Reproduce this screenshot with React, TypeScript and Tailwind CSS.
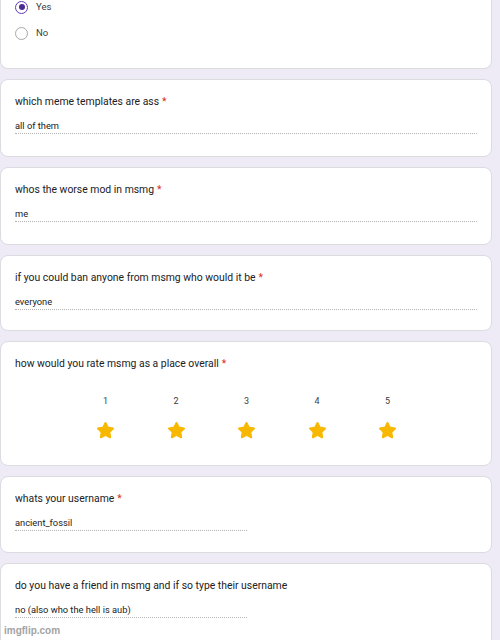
import { Star } from 'lucide-react';

const ink = 'text-[#202124]';

function Card({ className = '', children }: { className?: string; children: React.ReactNode }) {
  return (
    <div className={`shrink-0 rounded-lg border border-[#dadce0] bg-white px-[14px] ${className}`}>
      {children}
    </div>
  );
}

function Title({ text, required = true }: { text: string; required?: boolean }) {
  return (
    <div className={`pt-[14px] text-[10.4px] leading-[16px] ${ink}`}>
      {text}
      {required && <span className="ml-[3px] text-[#d93025]">*</span>}
    </div>
  );
}

function Answer({ value, short = false }: { value: string; short?: boolean }) {
  return (
    <div
      className={`mt-[10px] border-b border-dotted border-[#b4b4b4] pb-[1px] text-[9.3px] leading-[12px] ${ink} ${
        short ? 'w-[232px]' : 'w-full'
      }`}
    >
      {value}
    </div>
  );
}

function Radio({ label, checked }: { label: string; checked?: boolean }) {
  return (
    <div className="flex h-[14px] items-center gap-[8px]">
      <div
        className={`flex h-[13px] w-[13px] items-center justify-center rounded-full border-[1.5px] ${
          checked ? 'border-[#673ab7]' : 'border-[#a8a8a8]'
        }`}
      >
        {checked && <div className="h-[6px] w-[6px] rounded-full bg-[#4a2b8f]" />}
      </div>
      <span className="text-[9.5px] text-[#3c4043]">{label}</span>
    </div>
  );
}

export default function App() {
  return (
    <div
      className="relative flex h-[640px] w-[500px] flex-col gap-[10px] overflow-hidden bg-[#eeebf7] pr-[8px]"
      style={{ fontFamily: 'Roboto, "Liberation Sans", sans-serif' }}
    >
      {/* tail of the previous question */}
      <Card className="-mt-[20px] h-[89px] rounded-t-none border-t-0">
        <div className="flex flex-col gap-[12px] pt-[20px]">
          <Radio label="Yes" checked />
          <Radio label="No" />
        </div>
      </Card>

      <Card className="h-[78px]">
        <Title text="which meme templates are ass" />
        <Answer value="all of them" />
      </Card>

      <Card className="h-[78px]">
        <Title text="whos the worse mod in msmg" />
        <Answer value="me" />
      </Card>

      <Card className="h-[76px]">
        <Title text="if you could ban anyone from msmg who would it be" />
        <Answer value="everyone" />
      </Card>

      <Card className="h-[125px]">
        <Title text="how would you rate msmg as a place overall" />
        <div className="mt-[23px] flex justify-center pl-[1px]">
          {[1, 2, 3, 4, 5].map((n) => (
            <div key={n} className="flex w-[70.5px] flex-col items-center">
              <span className="text-[9px] leading-[12px] text-[#3c4043]">{n}</span>
              <Star className="mt-[14px] h-[19px] w-[19px] fill-[#f9b800] text-[#f9b800]" strokeWidth={1.5} strokeLinejoin="round" />
            </div>
          ))}
        </div>
      </Card>

      <Card className="h-[77px]">
        <Title text="whats your username" />
        <Answer value="ancient_fossil" short />
      </Card>

      <Card className="h-[90px]">
        <Title text="do you have a friend in msmg and if so type their username" required={false} />
        <Answer value="no (also who the hell is aub)" short />
      </Card>

      <span
        className="absolute bottom-[2px] left-[4px] text-[10px] font-bold text-[#a3a3a3]"
        style={{ fontFamily: '"Liberation Sans", Arial, sans-serif' }}
      >
        imgflip.com
      </span>
    </div>
  );
}
